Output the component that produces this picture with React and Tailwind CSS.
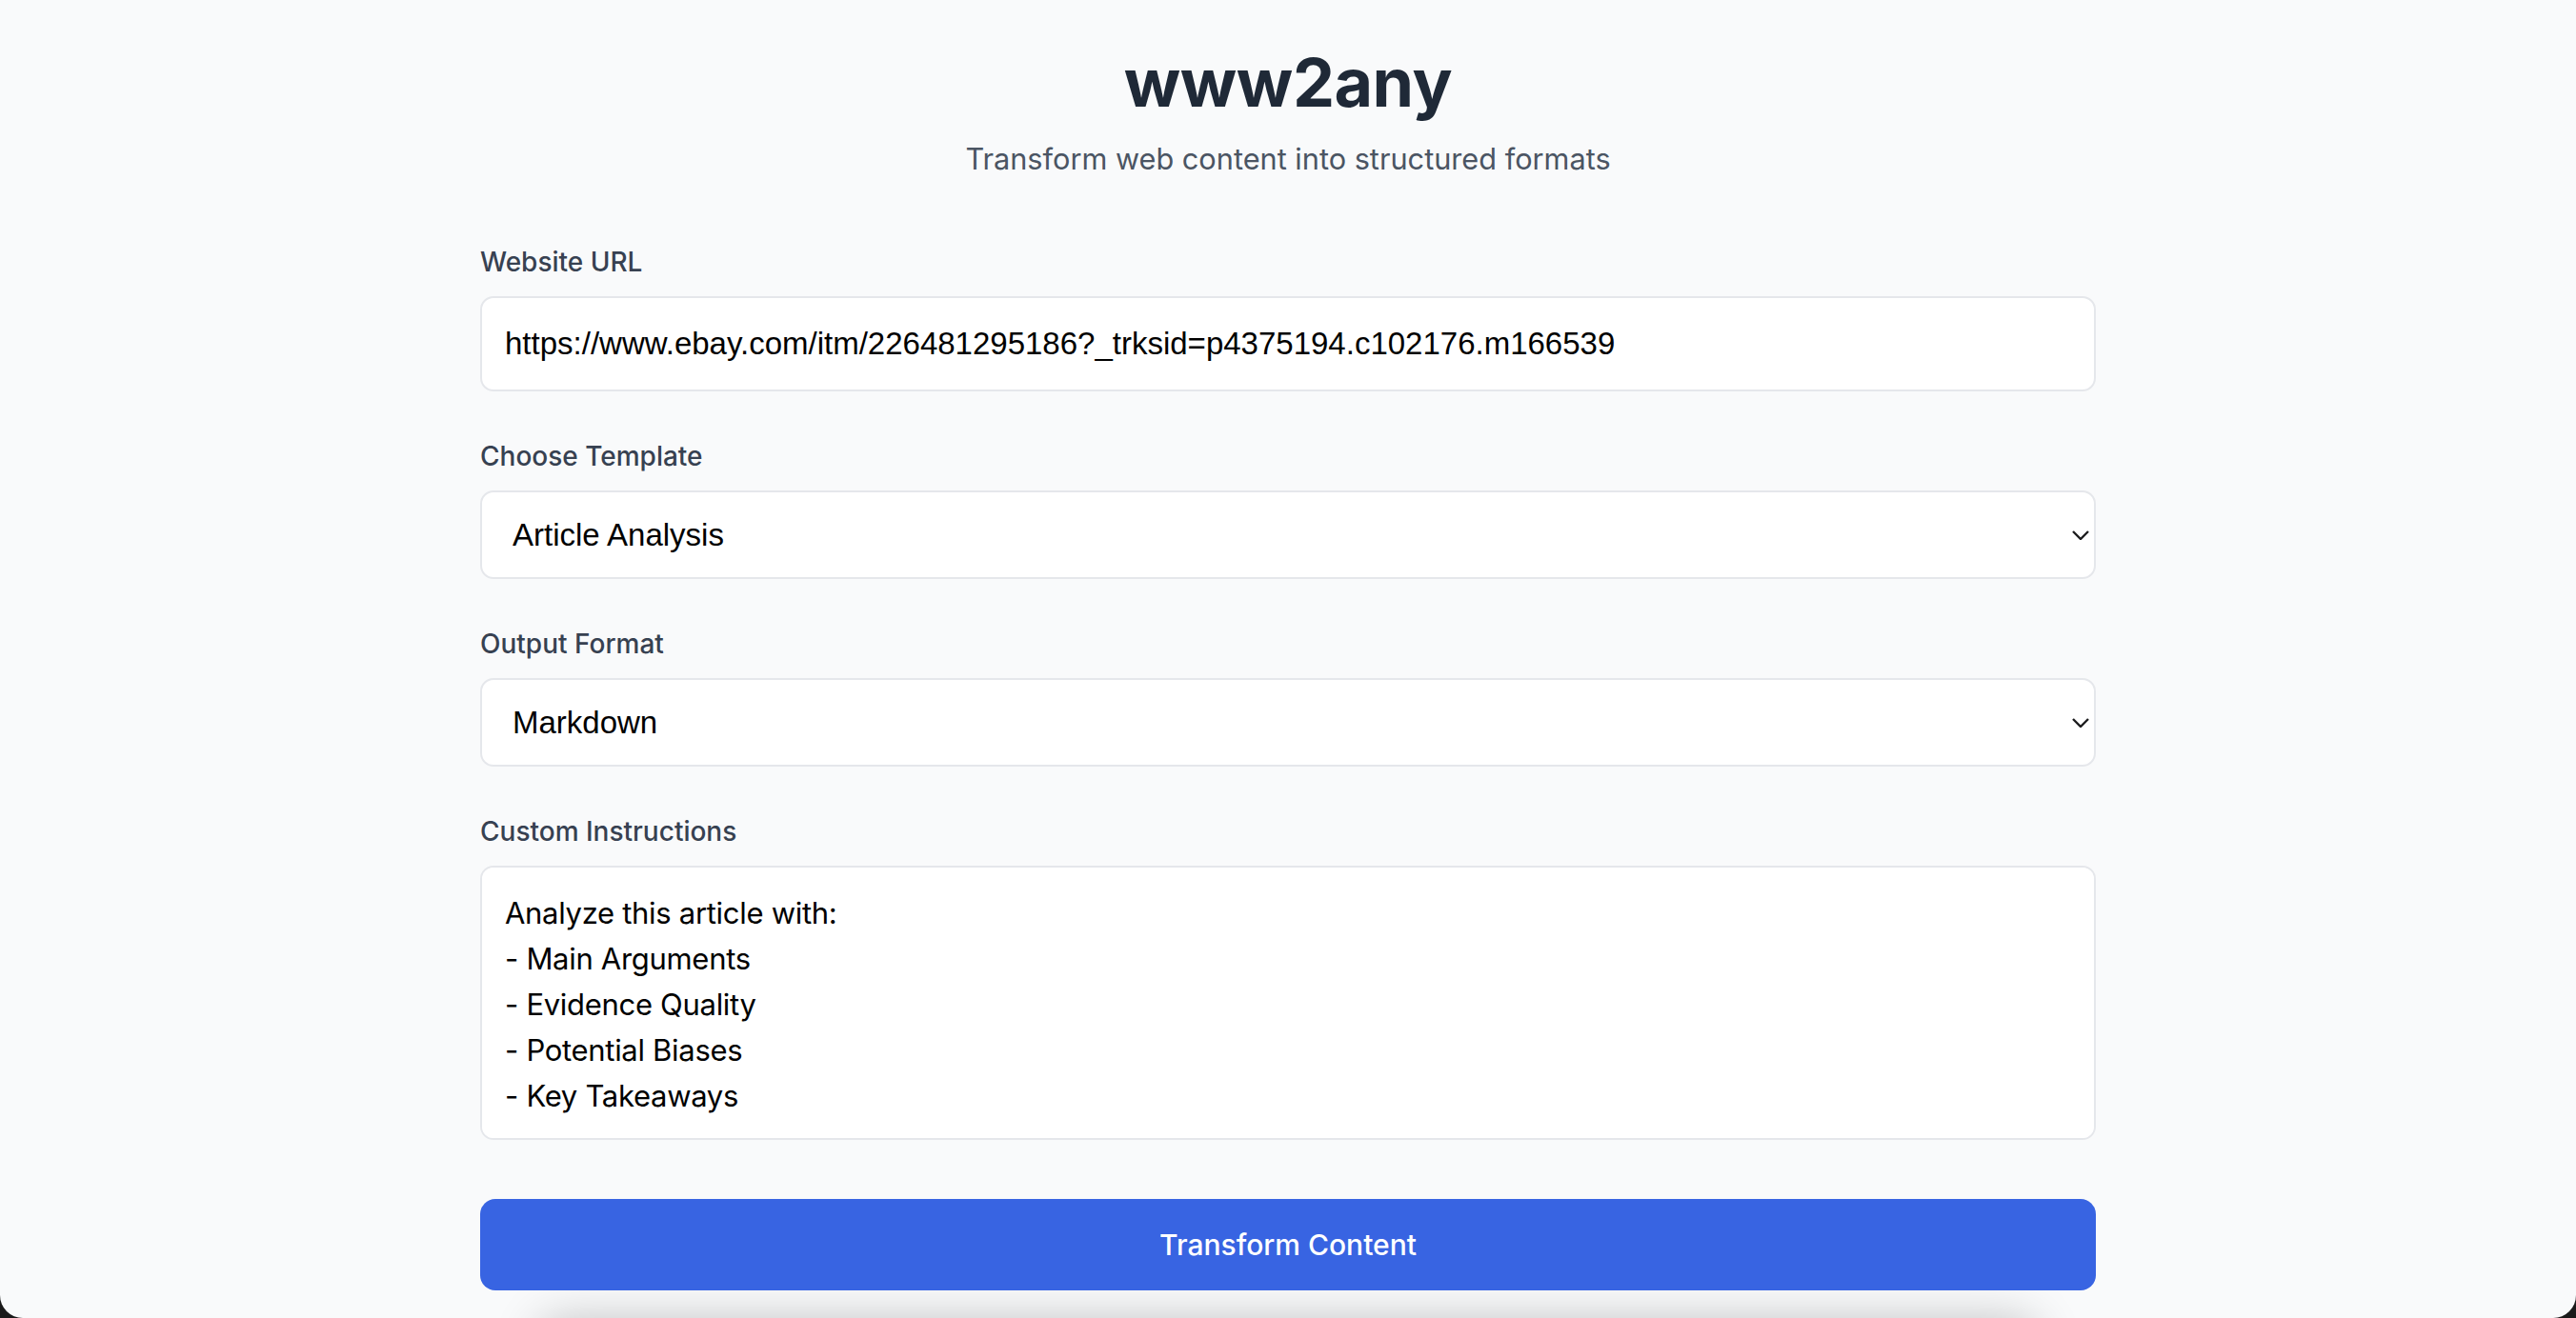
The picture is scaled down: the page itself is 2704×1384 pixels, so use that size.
import React from "react";

const label = "block text-[28px] leading-[40px] font-medium text-[#374151] mb-[16px]";
const field =
    "w-full bg-white border-2 border-[#e5e7eb] rounded-[14px] text-black outline-none";

function Chevron() {
    return (
        <svg
            className="pointer-events-none absolute right-[7px] top-1/2 -translate-y-1/2"
            width="18"
            height="10"
            viewBox="0 0 18 10"
            fill="none"
        >
            <polyline points="1,1 9,9 17,1" stroke="#1c1c1e" strokeWidth="2.4" />
        </svg>
    );
}

function Select({ value, options }) {
    return (
        <div className="relative">
            <select
                defaultValue={value}
                className={`${field} appearance-none h-[93px] pl-[32px] pr-[48px] text-[33px] font-['Liberation_Sans',Arial,sans-serif]`}
            >
                {options.map((o) => (
                    <option key={o}>{o}</option>
                ))}
            </select>
            <Chevron />
        </div>
    );
}

export default function App() {
    return (
        <div className="h-[1384px] bg-[#1a1a1a] overflow-hidden">
            <div className="h-full bg-[#f9fafb] rounded-b-[24px] overflow-hidden font-['Inter',sans-serif]">
                <div className="w-[1696px] mx-auto pt-[47px]">
                    {/* Header */}
                    <div className="text-center mb-[64px]">
                        <h1 className="text-[70px] leading-[80px] font-bold text-[#1f2937] tracking-[-0.5px]">
                            www2any
                        </h1>
                        <p className="mt-[16px] text-[30.7px] leading-[48px] text-[#4b5563]">
                            Transform web content into structured formats
                        </p>
                    </div>

                    {/* Form */}
                    <div className="flex flex-col gap-[48px]">
                        <div>
                            <label className={label}>Website URL</label>
                            <input
                                defaultValue="https://www.ebay.com/itm/226481295186?_trksid=p4375194.c102176.m166539"
                                className={`${field} px-[24px] py-[24px] text-[33px] leading-[48px] font-['Liberation_Sans',Arial,sans-serif]`}
                            />
                        </div>

                        <div>
                            <label className={label}>Choose Template</label>
                            <Select
                                value="Article Analysis"
                                options={["Article Analysis", "Product Details", "Summary"]}
                            />
                        </div>

                        <div>
                            <label className={label}>Output Format</label>
                            <Select value="Markdown" options={["Markdown", "JSON", "CSV"]} />
                        </div>

                        <div>
                            <label className={label}>Custom Instructions</label>
                            <textarea
                                defaultValue={
                                    "Analyze this article with:\n- Main Arguments\n- Evidence Quality\n- Potential Biases\n- Key Takeaways"
                                }
                                className={`${field} block h-[288px] resize-none p-[24px] text-[31px] leading-[48px] tracking-[-0.3px] font-['Inter',sans-serif]`}
                            />
                        </div>
                    </div>

                    <button className="mt-[62px] w-full rounded-[16px] bg-[#3864e2] py-[24px] text-[30px] leading-[48px] font-medium text-white">
                        Transform Content
                    </button>

                    {/* result card, starts below the fold */}
                    <div className="mt-[32px] mx-[64px] h-[400px] rounded-[16px] bg-white shadow-[0_0_50px_rgba(0,0,0,0.24)]" />
                </div>
            </div>
        </div>
    );
}
